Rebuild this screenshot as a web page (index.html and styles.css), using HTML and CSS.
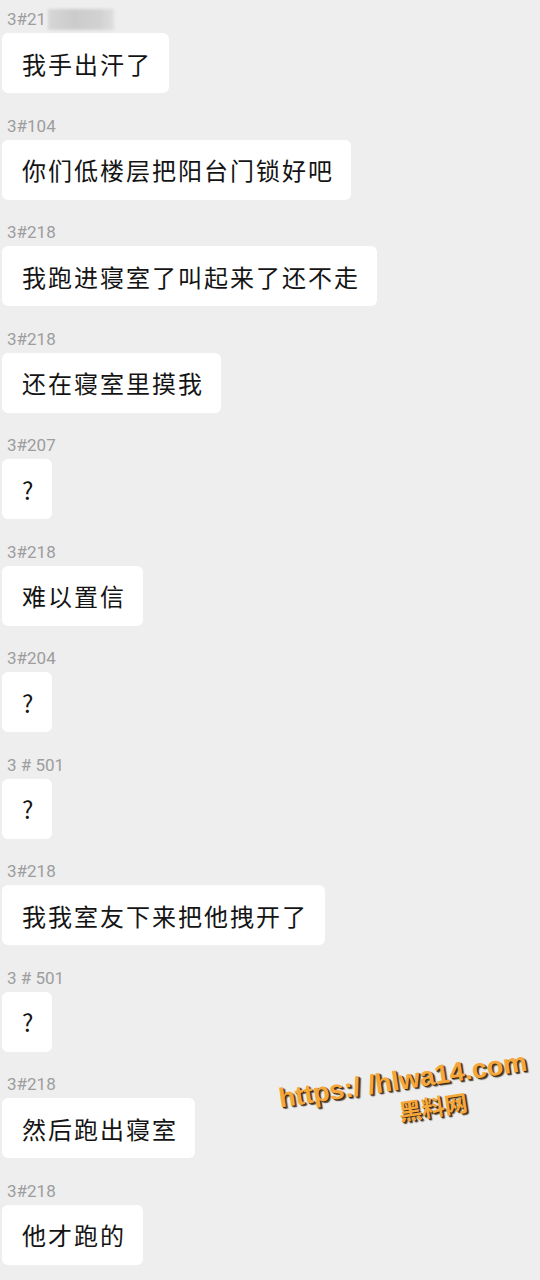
FILE: index.html
```html
<!DOCTYPE html>
<html lang="zh-CN">
<head>
<meta charset="utf-8">
<title>chat</title>
<link rel="stylesheet" href="styles.css">
</head>
<body>
<div class="chat">
  <div class="msg">
    <div class="name">3#21<span class="mask"></span></div>
    <div class="bubble">我手出汗了</div>
  </div>
  <div class="msg">
    <div class="name">3#104</div>
    <div class="bubble">你们低楼层把阳台门锁好吧</div>
  </div>
  <div class="msg">
    <div class="name">3#218</div>
    <div class="bubble">我跑进寝室了叫起来了还不走</div>
  </div>
  <div class="msg">
    <div class="name">3#218</div>
    <div class="bubble">还在寝室里摸我</div>
  </div>
  <div class="msg">
    <div class="name">3#207</div>
    <div class="bubble">?</div>
  </div>
  <div class="msg">
    <div class="name">3#218</div>
    <div class="bubble">难以置信</div>
  </div>
  <div class="msg">
    <div class="name">3#204</div>
    <div class="bubble">?</div>
  </div>
  <div class="msg">
    <div class="name">3 # 501</div>
    <div class="bubble">?</div>
  </div>
  <div class="msg">
    <div class="name">3#218</div>
    <div class="bubble">我我室友下来把他拽开了</div>
  </div>
  <div class="msg">
    <div class="name">3 # 501</div>
    <div class="bubble">?</div>
  </div>
  <div class="msg">
    <div class="name">3#218</div>
    <div class="bubble">然后跑出寝室</div>
  </div>
  <div class="msg">
    <div class="name">3#218</div>
    <div class="bubble">他才跑的</div>
  </div>
</div>
<div class="watermark">
  <div class="wm-url">https:/ /hlwa14.com</div>
  <div class="wm-name">黑料网</div>
</div>
</body>
</html>
```
FILE: styles.css
```css
html, body {
  margin: 0;
  padding: 0;
}
body {
  background: #eeeeee;
  width: 540px;
  height: 1280px;
  overflow: hidden;
  position: relative;
  font-family: "Noto Sans CJK SC", "Noto Sans", sans-serif;
}
.chat {
  display: flex;
  flex-direction: column;
  gap: 21.5px;
  padding: 8px 0 0 2px;
}
.msg {
  display: flex;
  flex-direction: column;
}
.name {
  font-family: Roboto, "Noto Sans", sans-serif;
  font-size: 17px;
  line-height: 22px;
  color: #9d9d9d;
  padding-left: 5px;
  margin-bottom: 3px;
  display: flex;
  align-items: center;
}
.mask {
  display: inline-block;
  width: 66px;
  height: 21px;
  margin-left: 2px;
  background: linear-gradient(90deg, #d6d6d6, #cbcbcb 40%, #d2d2d2 80%, #dedede);
  filter: blur(1.5px);
}
.bubble {
  display: flex;
  align-items: center;
  width: fit-content;
  height: 60px;
  box-sizing: border-box;
  padding: 0 17px 0 20px;
  background: #ffffff;
  border-radius: 6px;
  font-size: 24px;
  letter-spacing: 2px;
  color: #141414;
}
.watermark {
  position: absolute;
  left: 265px;
  top: 1065px;
  width: 280px;
  transform: rotate(-8.5deg);
  transform-origin: center;
  text-align: center;
  color: #f6a73c;
  font-family: "Liberation Sans", Arial, sans-serif;
  font-weight: 700;
  text-shadow: 1px 1px 0 #3a2a10, 2px 2px 1px rgba(40, 25, 5, 0.75);
}
.wm-url {
  font-size: 27px;
  line-height: 30px;
  white-space: nowrap;
}
.wm-name {
  font-family: "Noto Sans CJK SC", sans-serif;
  font-size: 23px;
  line-height: 30px;
  padding-left: 52px;
}
```
